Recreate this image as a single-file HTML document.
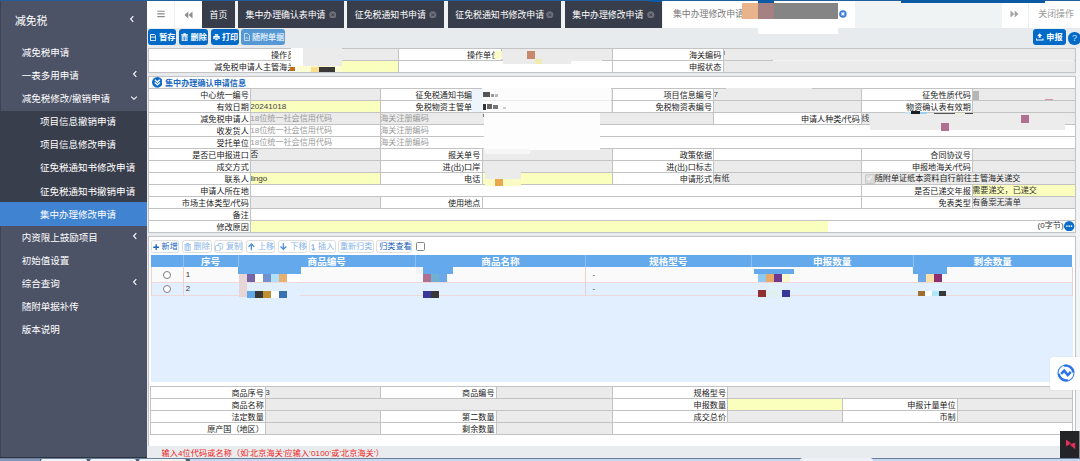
<!DOCTYPE html><html lang="zh-CN"><head><meta charset="utf-8"><title>减免税</title>
<style>html,body{margin:0;padding:0}body{width:1080px;height:461px;position:relative;overflow:hidden;background:#e7ebee;font-family:"Liberation Sans","Noto Sans CJK SC",sans-serif;font-size:8.1px;color:#222}
div{box-sizing:border-box}.t{position:absolute;white-space:nowrap;line-height:1}
.c{position:absolute;overflow:hidden;white-space:nowrap;line-height:1}.lab{text-align:right;color:#1a1a1a}
.sb{position:absolute;left:0;width:147px;color:#fff;font-size:9.45px;white-space:nowrap}
.tab{position:absolute;top:1px;height:26.5px;background:#383d4b;color:#fff;font-size:8.9px;line-height:28.1px;white-space:nowrap}
.btn{position:absolute;border-radius:2.5px;color:#fff;font-weight:bold;font-size:8.1px;white-space:nowrap;overflow:hidden}
.gb{position:absolute;top:240.4px;height:12.7px;border:0.7px solid #dedede;border-radius:2.6px;background:#fff;font-size:8.1px;line-height:11.3px;white-space:nowrap}
</style></head><body>
<div style="position:absolute;left:0.00px;top:0.00px;width:1080.00px;height:1.00px;background:#215f9c;"></div>
<div style="position:absolute;left:0.00px;top:1.00px;width:147.00px;height:457.00px;background:#4d5367;"></div>
<div style="position:absolute;left:0.00px;top:1.00px;width:1.20px;height:457.00px;background:#3e4356;"></div>
<div style="position:absolute;left:0.00px;top:110.60px;width:147.00px;height:91.80px;background:#393e4c;"></div>
<div style="position:absolute;left:0.00px;top:202.40px;width:147.00px;height:23.30px;background:#4083d1;"></div>
<div class="t" style="left:15.00px;top:15.50px;color:#fff;font-size:10.80px">减免税</div>
<svg style="position:absolute;left:128.60px;top:14.90px" width="6" height="8" viewBox="0 0 6 8"><path d="M4.3 1.2 L1.6 4 L4.3 6.8" fill="none" stroke="#fff" stroke-width="1.1"/></svg>
<div class="t" style="left:21.70px;top:47.94px;color:#fff;font-size:9.52px">减免税申请</div>
<div class="t" style="left:21.70px;top:71.04px;color:#fff;font-size:9.52px">一表多用申请</div>
<svg style="position:absolute;left:131.50px;top:69.80px" width="6" height="8" viewBox="0 0 6 8"><path d="M4.3 1.2 L1.6 4 L4.3 6.8" fill="none" stroke="#fff" stroke-width="1.1"/></svg>
<div class="t" style="left:21.70px;top:94.14px;color:#fff;font-size:9.52px">减免税修改/撤销申请</div>
<svg style="position:absolute;left:129.80px;top:94.70px" width="8" height="6" viewBox="0 0 8 6"><path d="M1.2 1.6 L4 4.3 L6.8 1.6" fill="none" stroke="#fff" stroke-width="1.1"/></svg>
<div class="t" style="left:40.00px;top:117.24px;color:#fff;font-size:9.52px">项目信息撤销申请</div>
<div class="t" style="left:40.00px;top:140.34px;color:#fff;font-size:9.52px">项目信息修改申请</div>
<div class="t" style="left:40.00px;top:163.44px;color:#fff;font-size:9.52px">征免税通知书修改申请</div>
<div class="t" style="left:40.00px;top:186.54px;color:#fff;font-size:9.52px">征免税通知书撤销申请</div>
<div class="t" style="left:40.00px;top:209.64px;color:#fff;font-size:9.52px">集中办理修改申请</div>
<div class="t" style="left:21.70px;top:232.74px;color:#fff;font-size:9.52px">内资限上鼓励项目</div>
<svg style="position:absolute;left:131.50px;top:231.50px" width="6" height="8" viewBox="0 0 6 8"><path d="M4.3 1.2 L1.6 4 L4.3 6.8" fill="none" stroke="#fff" stroke-width="1.1"/></svg>
<div class="t" style="left:21.70px;top:255.84px;color:#fff;font-size:9.52px">初始值设置</div>
<div class="t" style="left:21.70px;top:278.94px;color:#fff;font-size:9.52px">综合查询</div>
<svg style="position:absolute;left:131.50px;top:277.70px" width="6" height="8" viewBox="0 0 6 8"><path d="M4.3 1.2 L1.6 4 L4.3 6.8" fill="none" stroke="#fff" stroke-width="1.1"/></svg>
<div class="t" style="left:21.70px;top:302.04px;color:#fff;font-size:9.52px">随附单据补传</div>
<div class="t" style="left:21.70px;top:325.14px;color:#fff;font-size:9.52px">版本说明</div>
<div style="position:absolute;left:147.00px;top:1.00px;width:933.00px;height:26.80px;background:#eff3f4;"></div>
<div style="position:absolute;left:147.00px;top:1.00px;width:54.75px;height:26.50px;background:#fff;"></div>
<div style="position:absolute;left:174.00px;top:1.00px;width:0.60px;height:26.50px;background:#eceef0;"></div>
<svg style="position:absolute;left:156.5px;top:10px" width="8" height="8" viewBox="0 0 8 8"><path d="M0.3 1.2H7.7M0.3 3.9H7.7M0.3 6.6H7.7" stroke="#8a8a8a" stroke-width="1.1"/></svg>
<svg style="position:absolute;left:183.5px;top:10.5px" width="9" height="8" viewBox="0 0 9 8"><path d="M4.3 0.5 L4.3 7.5 L0.5 4 Z M8.5 0.5 L8.5 7.5 L4.7 4 Z" fill="#8d8d8d"/></svg>
<div class="tab" style="left:201.75px;width:32.75px"><span style="position:absolute;left:7.8px;top:0">首页</span></div>
<div class="tab" style="left:237.75px;width:106.00px"><span style="position:absolute;left:7.8px;top:0">集中办理确认表申请</span><svg style="position:absolute;right:7.3px;top:9.6px" width="7.6" height="7.6" viewBox="0 0 10 10"><circle cx="5" cy="5" r="4.7" fill="#6d707a"/><path d="M3.2 3.2L6.8 6.8M6.8 3.2L3.2 6.8" stroke="#383d4b" stroke-width="1.3"/></svg></div>
<div class="tab" style="left:347.00px;width:97.25px"><span style="position:absolute;left:7.8px;top:0">征免税通知书申请</span><svg style="position:absolute;right:7.3px;top:9.6px" width="7.6" height="7.6" viewBox="0 0 10 10"><circle cx="5" cy="5" r="4.7" fill="#6d707a"/><path d="M3.2 3.2L6.8 6.8M6.8 3.2L3.2 6.8" stroke="#383d4b" stroke-width="1.3"/></svg></div>
<div class="tab" style="left:447.50px;width:113.75px"><span style="position:absolute;left:7.8px;top:0">征免税通知书修改申请</span><svg style="position:absolute;right:7.3px;top:9.6px" width="7.6" height="7.6" viewBox="0 0 10 10"><circle cx="5" cy="5" r="4.7" fill="#6d707a"/><path d="M3.2 3.2L6.8 6.8M6.8 3.2L3.2 6.8" stroke="#383d4b" stroke-width="1.3"/></svg></div>
<div class="tab" style="left:564.50px;width:97.50px"><span style="position:absolute;left:7.8px;top:0">集中办理修改申请</span><svg style="position:absolute;right:7.3px;top:9.6px" width="7.6" height="7.6" viewBox="0 0 10 10"><circle cx="5" cy="5" r="4.7" fill="#6d707a"/><path d="M3.2 3.2L6.8 6.8M6.8 3.2L3.2 6.8" stroke="#383d4b" stroke-width="1.3"/></svg></div>
<div style="position:absolute;left:663.00px;top:1.00px;width:192.00px;height:26.50px;background:#fff;"></div>
<div class="t" style="left:673px;top:10.4px;font-size:8.9px;color:#7a7a7a">集中办理修改申请</div>
<div style="position:absolute;left:742.00px;top:3.00px;width:16.00px;height:15.80px;background:#e9b48b;"></div>
<div style="position:absolute;left:758.00px;top:3.00px;width:16.00px;height:15.80px;background:#a68181;"></div>
<div style="position:absolute;left:774.00px;top:3.00px;width:63.50px;height:15.80px;background:#858585;"></div>
<svg style="position:absolute;left:839.2px;top:10.4px" width="7.8" height="7.8" viewBox="0 0 10 10"><circle cx="5" cy="5" r="4.8" fill="#3f7fd0"/><path d="M3.2 3.2L6.8 6.8M6.8 3.2L3.2 6.8" stroke="#fff" stroke-width="1.4"/></svg>
<div style="position:absolute;left:1001.90px;top:1.00px;width:78.10px;height:26.50px;background:#fff;"></div>
<div style="position:absolute;left:1028.00px;top:1.00px;width:0.60px;height:26.50px;background:#eceef0;"></div>
<svg style="position:absolute;left:1010px;top:10.2px" width="9" height="8" viewBox="0 0 9 8"><path d="M0.5 0.5 L0.5 7.5 L4.3 4 Z M4.7 0.5 L4.7 7.5 L8.5 4 Z" fill="#a3a3a3"/></svg>
<div class="t" style="left:1038.3px;top:10.3px;font-size:8.9px;color:#9a9a9a">关闭操作</div>
<div style="position:absolute;left:0.00px;top:0.00px;width:1080.00px;height:1.00px;background:#215f9c;"></div>
<div style="position:absolute;left:650.00px;top:0.00px;width:12.00px;height:1.50px;background:#0b5aa3;"></div>
<div style="position:absolute;left:758.00px;top:0.00px;width:16.00px;height:3.00px;background:#0b5aa3;"></div>
<div style="position:absolute;left:901.30px;top:0.00px;width:143.50px;height:2.80px;background:#0b5aa3;"></div>
<div style="position:absolute;left:147.00px;top:27.80px;width:933.00px;height:20.20px;background:#e7ebee;"></div>
<div class="btn" style="left:148.40px;top:29.3px;width:27.60px;height:15.5px;background:#036bc7;line-height:16.2px;color:#fff;border-radius:3px"><svg style="position:absolute;left:1.4px;top:4.4px" width="6.2" height="7.2" viewBox="0 0 6.2 7.2"><path d="M0.5 0.5H4.6L5.7 1.6V6.7H0.5Z" fill="none" stroke="#fff" stroke-width="0.95"/><path d="M0.6 3.1H5.6" stroke="#fff" stroke-width="0.9"/></svg><span style="position:absolute;left:10.80px;top:0.9px">暂存</span></div>
<div class="btn" style="left:179.00px;top:29.3px;width:29.00px;height:15.5px;background:#036bc7;line-height:16.2px;color:#fff;border-radius:3px"><svg style="position:absolute;left:1.8px;top:3.4px" width="7.2" height="8.6" viewBox="0 0 7.2 8.6"><path d="M0.2 1.9H7M2.4 0.7H4.8" stroke="#fff" stroke-width="1.1"/><path d="M1.2 3H6V8H1.2Z" fill="none" stroke="#fff" stroke-width="1"/><path d="M2.8 3V8M4.4 3V8" stroke="#fff" stroke-width="0.8"/></svg><span style="position:absolute;left:11.60px;top:0.9px">删除</span></div>
<div class="btn" style="left:211.00px;top:29.3px;width:27.70px;height:15.5px;background:#036bc7;line-height:16.2px;color:#fff;border-radius:3px"><svg style="position:absolute;left:1.8px;top:5px" width="7" height="6.6" viewBox="0 0 7 6.6"><path d="M1.8 0.3H5.2V1.8H1.8Z" fill="#fff"/><path d="M0.3 2H6.7V5H0.3Z" fill="#fff"/><path d="M1.9 3.9H5.1V6.3H1.9Z" fill="#fff" stroke="#036bc7" stroke-width="0.55"/></svg><span style="position:absolute;left:10.90px;top:0.9px">打印</span></div>
<div class="btn" style="left:241.00px;top:29.3px;width:44.30px;height:15.5px;background:#5698d4;line-height:16.2px;color:#dbe9f8;border-radius:3px"><svg style="position:absolute;left:3.2px;top:3.8px" width="6" height="8" viewBox="0 0 6 8"><path d="M0.5 0.5H3.6L5.5 2.4V7.5H0.5Z" fill="none" stroke="#d6e6f7" stroke-width="0.85"/><path d="M1.6 5.8L2.8 4.2L4.2 6" fill="none" stroke="#d6e6f7" stroke-width="0.7"/></svg><span style="position:absolute;left:10.90px;top:0.9px">随附单据</span></div>
<div class="btn" style="left:1032.80px;top:29.3px;width:33.30px;height:15.5px;background:#036bc7;line-height:16.2px;color:#fff;border-radius:3px"><svg style="position:absolute;left:3.6px;top:4px" width="7.4" height="7.6" viewBox="0 0 7.4 7.6"><path d="M3.7 0.2L6.2 3H4.7V4.8H2.7V3H1.2Z" fill="#fff"/><path d="M0.4 5.4V7H7V5.4" fill="none" stroke="#fff" stroke-width="1.1"/></svg><span style="position:absolute;left:13.50px;top:0.9px">申报</span></div>
<div style="position:absolute;left:1068.3px;top:32.3px;width:12.4px;height:12.4px;border-radius:50%;background:#036bc7;color:#cfe2f6;font-size:9px;line-height:12.4px;text-align:center">?</div>
<div style="position:absolute;left:758.00px;top:18.80px;width:79.50px;height:15.70px;background:#fff;"></div>
<div style="position:absolute;left:290.00px;top:44.00px;width:48.00px;height:4.60px;background:#e7ebee;"></div>
<div style="position:absolute;left:1076.20px;top:48.00px;width:3.80px;height:398.30px;background:#f3f4f6;"></div>
<div style="position:absolute;left:147.75px;top:48.00px;width:928.25px;height:24.50px;background:#c3c3c3;"></div>
<div class="c lab" style="left:148.75px;top:49.00px;width:147.75px;height:10.75px;background:#ffffff;line-height:14.35px;padding-right:1.20px;">操作员</div>
<div class="c " style="left:297.50px;top:49.00px;width:100.75px;height:10.75px;background:#ebebeb;line-height:11.55px;padding-left:0.00px;text-indent:-0.8px;"></div>
<div class="c lab" style="left:399.25px;top:49.00px;width:101.25px;height:10.75px;background:#ffffff;line-height:14.35px;padding-right:1.20px;">操作单位</div>
<div class="c " style="left:501.50px;top:49.00px;width:110.00px;height:10.75px;background:#ebebeb;line-height:11.55px;padding-left:0.00px;text-indent:-0.8px;"></div>
<div class="c lab" style="left:612.50px;top:49.00px;width:110.00px;height:10.75px;background:#ffffff;line-height:14.35px;padding-right:1.20px;">海关编码</div>
<div class="c " style="left:723.50px;top:49.00px;width:351.50px;height:10.75px;background:#ebebeb;line-height:11.55px;padding-left:0.00px;text-indent:-0.8px;"></div>
<div class="c lab" style="left:148.75px;top:60.75px;width:147.75px;height:10.75px;background:#ffffff;line-height:14.35px;padding-right:1.20px;">减免税申请人主管海关</div>
<div class="c " style="left:297.50px;top:60.75px;width:100.75px;height:10.75px;background:#faffbd;line-height:11.55px;padding-left:0.00px;text-indent:-0.8px;"></div>
<div class="c " style="left:399.25px;top:60.75px;width:212.25px;height:10.75px;background:#ffffff;line-height:11.55px;padding-left:0.00px;text-indent:-0.8px;"></div>
<div class="c lab" style="left:612.50px;top:60.75px;width:110.00px;height:10.75px;background:#ffffff;line-height:14.35px;padding-right:1.20px;">申报状态</div>
<div class="c " style="left:723.50px;top:60.75px;width:351.50px;height:10.75px;background:#ebebeb;line-height:11.55px;padding-left:0.00px;text-indent:-0.8px;"></div>
<div style="position:absolute;left:147.75px;top:75.60px;width:928.25px;height:157.01px;background:#c3c3c3;"></div>
<div style="position:absolute;left:148.75px;top:76.50px;width:926.25px;height:11.55px;background:#ffffff;"></div>
<svg style="position:absolute;left:151.7px;top:77.1px" width="10.7" height="10.7" viewBox="0 0 10 10"><circle cx="5" cy="5" r="5" fill="#0a6cc8"/><path d="M2.6 2.6L5 4.8L7.4 2.6M2.6 5.2L5 7.4L7.4 5.2" fill="none" stroke="#fff" stroke-width="1.3"/></svg>
<div class="t" style="left:165px;top:79.5px;font-size:8.12px;font-weight:bold;color:#1a6ac2">集中办理确认申请信息</div>
<div class="c lab" style="left:148.75px;top:89.05px;width:101.25px;height:10.96px;background:#ffffff;line-height:14.56px;padding-right:1.20px;">中心统一编号</div>
<div class="c " style="left:251.00px;top:89.05px;width:129.00px;height:10.96px;background:#ebebeb;line-height:11.76px;padding-left:0.00px;text-indent:-0.8px;"></div>
<div class="c lab" style="left:381.00px;top:89.05px;width:100.50px;height:10.96px;background:#ffffff;line-height:14.56px;padding-right:1.20px;">征免税通知书编号</div>
<div class="c " style="left:482.50px;top:89.05px;width:129.00px;height:10.96px;background:#ebebeb;line-height:11.76px;padding-left:0.00px;text-indent:-0.8px;"></div>
<div class="c lab" style="left:612.50px;top:89.05px;width:100.75px;height:10.96px;background:#ffffff;line-height:14.56px;padding-right:1.20px;">项目信息编号</div>
<div class="c " style="left:714.25px;top:89.05px;width:146.75px;height:10.96px;background:#ebebeb;line-height:11.76px;color:#444;padding-left:0.00px;text-indent:-0.8px;">7</div>
<div class="c lab" style="left:862.00px;top:89.05px;width:110.00px;height:10.96px;background:#ffffff;line-height:14.56px;padding-right:1.20px;">征免性质代码</div>
<div class="c " style="left:973.00px;top:89.05px;width:102.00px;height:10.96px;background:#ebebeb;line-height:11.76px;padding-left:0.00px;text-indent:-0.8px;"></div>
<div class="c lab" style="left:148.75px;top:101.01px;width:101.25px;height:10.96px;background:#ffffff;line-height:14.56px;padding-right:1.20px;">有效日期</div>
<div class="c " style="left:251.00px;top:101.01px;width:129.00px;height:10.96px;background:#faffbd;line-height:11.76px;color:#444;padding-left:0.00px;text-indent:-0.8px;">20241018</div>
<div class="c lab" style="left:381.00px;top:101.01px;width:100.50px;height:10.96px;background:#ffffff;line-height:14.56px;padding-right:1.20px;">免税物资主管单位</div>
<div class="c " style="left:482.50px;top:101.01px;width:129.00px;height:10.96px;background:#ebebeb;line-height:11.76px;padding-left:0.00px;text-indent:-0.8px;"></div>
<div class="c lab" style="left:612.50px;top:101.01px;width:100.75px;height:10.96px;background:#ffffff;line-height:14.56px;padding-right:1.20px;">免税物资表编号</div>
<div class="c " style="left:714.25px;top:101.01px;width:146.75px;height:10.96px;background:#ebebeb;line-height:11.76px;padding-left:0.00px;text-indent:-0.8px;"></div>
<div class="c lab" style="left:862.00px;top:101.01px;width:110.00px;height:10.96px;background:#ffffff;line-height:14.56px;padding-right:1.20px;">物资确认表有效期</div>
<div class="c " style="left:973.00px;top:101.01px;width:102.00px;height:10.96px;background:#ebebeb;line-height:11.76px;padding-left:0.00px;text-indent:-0.8px;"></div>
<div class="c lab" style="left:148.75px;top:112.98px;width:101.25px;height:10.96px;background:#ffffff;line-height:14.56px;padding-right:1.20px;">减免税申请人</div>
<div class="c " style="left:251.00px;top:112.98px;width:129.00px;height:10.96px;background:#ebebeb;line-height:11.76px;color:#9a9a9a;padding-left:0.00px;text-indent:-0.8px;">18位统一社会信用代码</div>
<div class="c " style="left:381.00px;top:112.98px;width:332.25px;height:10.96px;background:#ebebeb;line-height:11.76px;color:#9a9a9a;padding-left:0.00px;text-indent:-0.8px;">海关注册编码</div>
<div class="c lab" style="left:714.25px;top:112.98px;width:146.75px;height:10.96px;background:#ffffff;line-height:14.56px;padding-right:1.20px;">申请人种类/代码</div>
<div class="c " style="left:862.00px;top:112.98px;width:213.00px;height:10.96px;background:#ebebeb;line-height:11.76px;color:#444;padding-left:0.00px;text-indent:-0.8px;">线</div>
<div class="c lab" style="left:148.75px;top:124.94px;width:101.25px;height:10.96px;background:#ffffff;line-height:14.56px;padding-right:1.20px;">收发货人</div>
<div class="c " style="left:251.00px;top:124.94px;width:129.00px;height:10.96px;background:#ffffff;line-height:11.76px;color:#9a9a9a;padding-left:0.00px;text-indent:-0.8px;">18位统一社会信用代码</div>
<div class="c " style="left:381.00px;top:124.94px;width:694.00px;height:10.96px;background:#ffffff;line-height:11.76px;color:#9a9a9a;padding-left:0.00px;text-indent:-0.8px;">海关注册编码</div>
<div class="c lab" style="left:148.75px;top:136.90px;width:101.25px;height:10.96px;background:#ffffff;line-height:14.56px;padding-right:1.20px;">受托单位</div>
<div class="c " style="left:251.00px;top:136.90px;width:129.00px;height:10.96px;background:#ffffff;line-height:11.76px;color:#9a9a9a;padding-left:0.00px;text-indent:-0.8px;">18位统一社会信用代码</div>
<div class="c " style="left:381.00px;top:136.90px;width:694.00px;height:10.96px;background:#ffffff;line-height:11.76px;color:#9a9a9a;padding-left:0.00px;text-indent:-0.8px;">海关注册编码</div>
<div class="c lab" style="left:148.75px;top:148.87px;width:101.25px;height:10.96px;background:#ffffff;line-height:14.56px;padding-right:1.20px;">是否已申报进口</div>
<div class="c " style="left:251.00px;top:148.87px;width:129.00px;height:10.96px;background:#ebebeb;line-height:11.76px;color:#333;padding-left:0.00px;text-indent:-0.8px;">否</div>
<div class="c lab" style="left:381.00px;top:148.87px;width:100.50px;height:10.96px;background:#ffffff;line-height:14.56px;padding-right:1.20px;">报关单号</div>
<div class="c " style="left:482.50px;top:148.87px;width:129.00px;height:10.96px;background:#ebebeb;line-height:11.76px;padding-left:0.00px;text-indent:-0.8px;"></div>
<div class="c lab" style="left:612.50px;top:148.87px;width:100.75px;height:10.96px;background:#ffffff;line-height:14.56px;padding-right:1.20px;">政策依据</div>
<div class="c " style="left:714.25px;top:148.87px;width:146.75px;height:10.96px;background:#ffffff;line-height:11.76px;padding-left:0.00px;text-indent:-0.8px;"></div>
<div class="c lab" style="left:862.00px;top:148.87px;width:110.00px;height:10.96px;background:#ffffff;line-height:14.56px;padding-right:1.20px;">合同协议号</div>
<div class="c " style="left:973.00px;top:148.87px;width:102.00px;height:10.96px;background:#ebebeb;line-height:11.76px;padding-left:0.00px;text-indent:-0.8px;"></div>
<div class="c lab" style="left:148.75px;top:160.83px;width:101.25px;height:10.96px;background:#ffffff;line-height:14.56px;padding-right:1.20px;">成交方式</div>
<div class="c " style="left:251.00px;top:160.83px;width:129.00px;height:10.96px;background:#ebebeb;line-height:11.76px;padding-left:0.00px;text-indent:-0.8px;"></div>
<div class="c lab" style="left:381.00px;top:160.83px;width:100.50px;height:10.96px;background:#ffffff;line-height:14.56px;padding-right:1.20px;">进(出)口岸</div>
<div class="c " style="left:482.50px;top:160.83px;width:129.00px;height:10.96px;background:#ebebeb;line-height:11.76px;padding-left:0.00px;text-indent:-0.8px;"></div>
<div class="c lab" style="left:612.50px;top:160.83px;width:100.75px;height:10.96px;background:#ffffff;line-height:14.56px;padding-right:1.20px;">进(出)口标志</div>
<div class="c " style="left:714.25px;top:160.83px;width:146.75px;height:10.96px;background:#ebebeb;line-height:11.76px;padding-left:0.00px;text-indent:-0.8px;"></div>
<div class="c lab" style="left:862.00px;top:160.83px;width:110.00px;height:10.96px;background:#ffffff;line-height:14.56px;padding-right:1.20px;">申报地海关/代码</div>
<div class="c " style="left:973.00px;top:160.83px;width:102.00px;height:10.96px;background:#ebebeb;line-height:11.76px;padding-left:0.00px;text-indent:-0.8px;"></div>
<div class="c lab" style="left:148.75px;top:172.79px;width:101.25px;height:10.96px;background:#ffffff;line-height:14.56px;padding-right:1.20px;">联系人</div>
<div class="c " style="left:251.00px;top:172.79px;width:129.00px;height:10.96px;background:#faffbd;line-height:11.76px;color:#333;padding-left:0.00px;text-indent:-0.8px;">lingo</div>
<div class="c lab" style="left:381.00px;top:172.79px;width:100.50px;height:10.96px;background:#ffffff;line-height:14.56px;padding-right:1.20px;">电话</div>
<div class="c " style="left:482.50px;top:172.79px;width:129.00px;height:10.96px;background:#faffbd;line-height:11.76px;padding-left:0.00px;text-indent:-0.8px;"></div>
<div class="c lab" style="left:612.50px;top:172.79px;width:100.75px;height:10.96px;background:#ffffff;line-height:14.56px;padding-right:1.20px;">申请形式</div>
<div class="c " style="left:714.25px;top:172.79px;width:146.75px;height:10.96px;background:#ebebeb;line-height:11.76px;color:#333;padding-left:0.00px;text-indent:-0.8px;">有纸</div>
<div class="c " style="left:862.00px;top:172.79px;width:213.00px;height:10.96px;background:#ebebeb;line-height:11.76px;color:#222;padding-left:0.00px;text-indent:-0.8px;"><span style="position:absolute;left:3px;top:1.6px;width:7.6px;height:7.8px;border:0.7px solid #c9c9c9;background:#dcdcdc;border-radius:1px"></span><svg style="position:absolute;left:3.6px;top:2.6px" width="7" height="6" viewBox="0 0 7 6"><path d="M1 3L2.8 4.8L6 1" fill="none" stroke="#f4f4f4" stroke-width="1.2"/></svg><span style="position:absolute;left:13.5px;top:0">随附单证纸本资料自行前往主管海关递交</span></div>
<div class="c lab" style="left:148.75px;top:184.75px;width:101.25px;height:10.96px;background:#ffffff;line-height:14.56px;padding-right:1.20px;">申请人所在地</div>
<div class="c " style="left:251.00px;top:184.75px;width:610.00px;height:10.96px;background:#ffffff;line-height:11.76px;padding-left:0.00px;text-indent:-0.8px;"></div>
<div class="c lab" style="left:862.00px;top:184.75px;width:110.00px;height:10.96px;background:#ffffff;line-height:14.56px;padding-right:1.20px;">是否已递交年报</div>
<div class="c " style="left:973.00px;top:184.75px;width:102.00px;height:10.96px;background:#faffbd;line-height:11.76px;color:#333;padding-left:0.00px;text-indent:-0.8px;">需要递交，已递交</div>
<div class="c lab" style="left:148.75px;top:196.72px;width:101.25px;height:10.96px;background:#ffffff;line-height:14.56px;padding-right:1.20px;">市场主体类型/代码</div>
<div class="c " style="left:251.00px;top:196.72px;width:129.00px;height:10.96px;background:#ebebeb;line-height:11.76px;padding-left:0.00px;text-indent:-0.8px;"></div>
<div class="c lab" style="left:381.00px;top:196.72px;width:100.50px;height:10.96px;background:#ffffff;line-height:14.56px;padding-right:1.20px;">使用地点</div>
<div class="c " style="left:482.50px;top:196.72px;width:378.50px;height:10.96px;background:#ffffff;line-height:11.76px;padding-left:0.00px;text-indent:-0.8px;"></div>
<div class="c lab" style="left:862.00px;top:196.72px;width:110.00px;height:10.96px;background:#ffffff;line-height:14.56px;padding-right:1.20px;">免表类型</div>
<div class="c " style="left:973.00px;top:196.72px;width:102.00px;height:10.96px;background:#ebebeb;line-height:11.76px;color:#333;padding-left:0.00px;text-indent:-0.8px;">有备案无清单</div>
<div class="c lab" style="left:148.75px;top:208.68px;width:101.25px;height:10.96px;background:#ffffff;line-height:14.56px;padding-right:1.20px;">备注</div>
<div class="c " style="left:251.00px;top:208.68px;width:824.00px;height:10.96px;background:#ffffff;line-height:11.76px;padding-left:0.00px;text-indent:-0.8px;"></div>
<div class="c lab" style="left:148.75px;top:220.64px;width:101.25px;height:10.96px;background:#ffffff;line-height:14.56px;padding-right:1.20px;">修改原因</div>
<div class="c " style="left:251.00px;top:220.64px;width:824.00px;height:10.96px;background:#ffffff;line-height:11.76px;padding-left:0.00px;text-indent:-0.8px;"></div>
<div style="position:absolute;left:251.00px;top:220.64px;width:577.00px;height:10.96px;background:#faffbd;"></div>
<div class="t" style="left:1037.5px;top:222.34px;font-size:8.1px;color:#333">(0字节)</div>
<svg style="position:absolute;left:1064.3px;top:221.04px" width="10.4" height="10.4" viewBox="0 0 10 10"><circle cx="5" cy="5" r="5" fill="#0a6cc8"/><circle cx="2.8" cy="5" r="0.8" fill="#fff"/><circle cx="5" cy="5" r="0.8" fill="#fff"/><circle cx="7.2" cy="5" r="0.8" fill="#fff"/></svg>
<div style="position:absolute;left:147.90px;top:236.00px;width:928.10px;height:210.30px;background:#c3c3c3;"></div>
<div style="position:absolute;left:148.80px;top:236.90px;width:926.30px;height:209.40px;background:#ffffff;"></div>
<div class="gb" style="left:151.00px;width:28.00px;color:#1a68c4"><svg style="position:absolute;left:0.80px;top:2.30px" width="6.4" height="6.4" viewBox="0 0 6.4 6.4"><path d="M3.2 0.2V6.2M0.2 3.2H6.2" stroke="#1a68c4" stroke-width="1.4"/></svg><span style="position:absolute;left:9.60px;top:0.1px">新增</span></div>
<div class="gb" style="left:181.70px;width:30.30px;color:#86b4e8"><svg style="position:absolute;left:1.40px;top:1.40px" width="7.2" height="8.3" viewBox="0 0 7.2 8.3"><path d="M0.2 1.7H7M2.4 0.5H4.8" stroke="#8fbaea" stroke-width="0.95"/><path d="M1.1 2.8H6.1V7.8H1.1Z" fill="none" stroke="#8fbaea" stroke-width="0.85"/><path d="M2.8 2.8V7.6M4.4 2.8V7.6" stroke="#8fbaea" stroke-width="0.75"/></svg><span style="position:absolute;left:10.90px;top:0.1px">删除</span></div>
<div class="gb" style="left:213.70px;width:29.30px;color:#86b4e8"><svg style="position:absolute;left:0.80px;top:1.40px" width="8.2" height="8.4" viewBox="0 0 8.2 8.4"><rect x="3" y="0.5" width="4.7" height="5.4" rx="1" fill="#fff" stroke="#8fbaea" stroke-width="0.8"/><rect x="0.5" y="2.5" width="4.7" height="5.4" rx="1" fill="#fff" stroke="#8fbaea" stroke-width="0.8"/></svg><span style="position:absolute;left:11.30px;top:0.1px">复制</span></div>
<div class="gb" style="left:246.20px;width:28.80px;color:#86b4e8"><svg style="position:absolute;left:1.30px;top:1.90px" width="6.8" height="7.4" viewBox="0 0 6.8 7.4"><path d="M3.4 7.2V1.2M0.5 3.9L3.4 1L6.3 3.9" fill="none" stroke="#4a90dc" stroke-width="1.35"/></svg><span style="position:absolute;left:10.80px;top:0.1px">上移</span></div>
<div class="gb" style="left:277.60px;width:29.40px;color:#86b4e8"><svg style="position:absolute;left:1.60px;top:1.90px" width="6.8" height="7.4" viewBox="0 0 6.8 7.4"><path d="M3.4 0.2V6.2M0.5 3.5L3.4 6.4L6.3 3.5" fill="none" stroke="#4a90dc" stroke-width="1.35"/></svg><span style="position:absolute;left:11.70px;top:0.1px">下移</span></div>
<div class="gb" style="left:309.20px;width:26.80px;color:#86b4e8"><svg style="position:absolute;left:1.30px;top:2.30px" width="4.2" height="7" viewBox="0 0 4.2 7"><path d="M2.3 0.4V6.2M0.6 4.6L2.3 6.3L4 4.6M0.6 1.6L2.3 0.5" fill="none" stroke="#6fa6e2" stroke-width="0.95"/></svg><span style="position:absolute;left:7.80px;top:0.1px">插入</span></div>
<div class="gb" style="left:337.90px;width:36.10px;color:#86b4e8"><span style="position:absolute;left:1.00px;top:0.1px">重新归类</span></div>
<div class="gb" style="left:376.40px;width:35.60px;color:#1560ba"><span style="position:absolute;left:1.80px;top:0.1px">归类查看</span></div>
<div style="position:absolute;left:416px;top:241.6px;width:9.4px;height:9.3px;border:0.9px solid #858585;border-radius:1.6px;background:#fff"></div>
<div style="position:absolute;left:151.00px;top:267.50px;width:922.20px;height:114.50px;background:#e2efff;"></div>
<div style="position:absolute;left:151.00px;top:255.00px;width:921.20px;height:12.00px;background:#64a9ec;"></div>
<div style="position:absolute;left:182.60px;top:255.00px;width:0.80px;height:12.00px;background:#8fc0f2;"></div>
<div class="t" style="left:183.00px;top:257.3px;width:55.00px;text-align:center;font-size:9.6px;font-weight:bold;color:#fff">序号</div>
<div style="position:absolute;left:237.60px;top:255.00px;width:0.80px;height:12.00px;background:#8fc0f2;"></div>
<div class="t" style="left:238.00px;top:257.3px;width:177.50px;text-align:center;font-size:9.6px;font-weight:bold;color:#fff">商品编号</div>
<div style="position:absolute;left:415.10px;top:255.00px;width:0.80px;height:12.00px;background:#8fc0f2;"></div>
<div class="t" style="left:415.50px;top:257.3px;width:170.00px;text-align:center;font-size:9.6px;font-weight:bold;color:#fff">商品名称</div>
<div style="position:absolute;left:585.10px;top:255.00px;width:0.80px;height:12.00px;background:#8fc0f2;"></div>
<div class="t" style="left:585.50px;top:257.3px;width:165.50px;text-align:center;font-size:9.6px;font-weight:bold;color:#fff">规格型号</div>
<div style="position:absolute;left:750.60px;top:255.00px;width:0.80px;height:12.00px;background:#8fc0f2;"></div>
<div class="t" style="left:751.00px;top:257.3px;width:162.30px;text-align:center;font-size:9.6px;font-weight:bold;color:#fff">申报数量</div>
<div style="position:absolute;left:912.90px;top:255.00px;width:0.80px;height:12.00px;background:#8fc0f2;"></div>
<div class="t" style="left:913.30px;top:257.3px;width:158.90px;text-align:center;font-size:9.6px;font-weight:bold;color:#fff">剩余数量</div>
<div style="position:absolute;left:151.00px;top:267.00px;width:921.20px;height:15.00px;background:#fafafa;"></div>
<div style="position:absolute;left:151.00px;top:281.60px;width:921.20px;height:0.60px;background:#efd8d8;"></div>
<div style="position:absolute;left:151.00px;top:295.20px;width:921.20px;height:0.60px;background:#efd8d8;"></div>
<div style="position:absolute;left:183.20px;top:267.00px;width:0.60px;height:28.60px;background:#edcfcf;"></div>
<div style="position:absolute;left:585.20px;top:267.00px;width:0.60px;height:28.60px;background:#edcfcf;"></div>
<div style="position:absolute;left:150.70px;top:267.00px;width:0.60px;height:28.60px;background:#edcfcf;"></div>
<div style="position:absolute;left:1071.90px;top:267.00px;width:0.60px;height:28.60px;background:#edcfcf;"></div>
<div style="position:absolute;left:163.00px;top:270.80px;width:8.4px;height:8.4px;border-radius:50%;border:0.75px solid #808080;background:#fff"></div>
<div style="position:absolute;left:163.00px;top:284.70px;width:8.4px;height:8.4px;border-radius:50%;border:0.75px solid #808080;background:#fff"></div>
<div class="t" style="left:185.8px;top:271px;font-size:7.8px;color:#333">1</div>
<div class="t" style="left:185.8px;top:284.5px;font-size:7.8px;color:#333">2</div>
<div class="t" style="left:592.5px;top:271px;font-size:7.8px;color:#333">-</div>
<div class="t" style="left:592.5px;top:284.5px;font-size:7.8px;color:#333">-</div>
<div style="position:absolute;left:238.00px;top:266.50px;width:63.00px;height:7.40px;background:#64a9ec;"></div>
<div style="position:absolute;left:239.40px;top:274.00px;width:7.60px;height:23.00px;background:#e8d6d6;"></div>
<div style="position:absolute;left:247.00px;top:274.00px;width:53.00px;height:8.00px;background:#fff;"></div>
<div style="position:absolute;left:247.00px;top:282.50px;width:53.00px;height:15.50px;background:#e2efff;"></div>
<div style="position:absolute;left:247.00px;top:274.40px;width:8.00px;height:7.60px;background:#7565a8;"></div>
<div style="position:absolute;left:255.00px;top:274.40px;width:8.00px;height:7.60px;background:#fff;"></div>
<div style="position:absolute;left:263.00px;top:274.40px;width:8.00px;height:7.60px;background:#7090d0;"></div>
<div style="position:absolute;left:271.00px;top:274.40px;width:8.00px;height:7.60px;background:#b0e0f8;"></div>
<div style="position:absolute;left:279.00px;top:274.40px;width:8.00px;height:7.60px;background:#e8b070;"></div>
<div style="position:absolute;left:247.00px;top:290.50px;width:8.00px;height:7.50px;background:#60a8e8;"></div>
<div style="position:absolute;left:255.00px;top:290.50px;width:8.00px;height:7.50px;background:#383838;"></div>
<div style="position:absolute;left:263.00px;top:290.50px;width:8.00px;height:7.50px;background:#c09030;"></div>
<div style="position:absolute;left:271.00px;top:290.50px;width:8.00px;height:7.50px;background:#fff;"></div>
<div style="position:absolute;left:279.00px;top:290.50px;width:8.00px;height:7.50px;background:#3870b8;"></div>
<div style="position:absolute;left:423.00px;top:266.50px;width:29.80px;height:7.40px;background:#64a9ec;"></div>
<div style="position:absolute;left:415.80px;top:267.00px;width:7.20px;height:7.00px;background:#f3f3f4;"></div>
<div style="position:absolute;left:423.00px;top:274.00px;width:8.00px;height:8.00px;background:#b07090;"></div>
<div style="position:absolute;left:431.00px;top:274.00px;width:8.00px;height:8.00px;background:#70b0d0;"></div>
<div style="position:absolute;left:439.00px;top:274.00px;width:8.00px;height:8.00px;background:#6aa8e8;"></div>
<div style="position:absolute;left:423.00px;top:290.50px;width:8.00px;height:7.50px;background:#383898;"></div>
<div style="position:absolute;left:431.00px;top:290.50px;width:8.00px;height:7.50px;background:#383838;"></div>
<div style="position:absolute;left:754.30px;top:269.30px;width:39.70px;height:4.70px;background:#64a9ec;"></div>
<div style="position:absolute;left:757.70px;top:274.00px;width:8.00px;height:8.00px;background:#90c8f0;"></div>
<div style="position:absolute;left:765.70px;top:274.00px;width:8.00px;height:8.00px;background:#e8a868;"></div>
<div style="position:absolute;left:773.70px;top:274.00px;width:8.00px;height:8.00px;background:#703890;"></div>
<div style="position:absolute;left:781.70px;top:274.00px;width:8.00px;height:8.00px;background:#f8f8d0;"></div>
<div style="position:absolute;left:757.70px;top:290.00px;width:8.00px;height:7.30px;background:#903030;"></div>
<div style="position:absolute;left:765.70px;top:290.00px;width:8.00px;height:7.30px;background:#e0f0f0;"></div>
<div style="position:absolute;left:773.70px;top:290.00px;width:8.00px;height:7.30px;background:#e0f0f0;"></div>
<div style="position:absolute;left:781.70px;top:290.00px;width:8.00px;height:7.30px;background:#383898;"></div>
<div style="position:absolute;left:913.30px;top:266.50px;width:33.40px;height:7.40px;background:#64a9ec;"></div>
<div style="position:absolute;left:917.50px;top:274.00px;width:8.00px;height:8.00px;background:#6aa8e8;"></div>
<div style="position:absolute;left:925.50px;top:274.00px;width:8.00px;height:8.00px;background:#f8e0a8;"></div>
<div style="position:absolute;left:933.50px;top:274.00px;width:8.00px;height:8.00px;background:#903070;"></div>
<div style="position:absolute;left:917.50px;top:290.50px;width:7.20px;height:5.50px;background:#a07030;"></div>
<div style="position:absolute;left:924.70px;top:290.50px;width:7.20px;height:5.50px;background:#fff;"></div>
<div style="position:absolute;left:931.90px;top:290.50px;width:7.20px;height:5.50px;background:#b0e8f8;"></div>
<div style="position:absolute;left:939.10px;top:290.50px;width:7.20px;height:5.50px;background:#383838;"></div>
<div style="position:absolute;left:149.80px;top:385.70px;width:923.40px;height:49.28px;background:#c3c3c3;"></div>
<div class="c lab" style="left:150.80px;top:386.70px;width:114.20px;height:11.07px;background:#ffffff;line-height:14.67px;padding-right:1.20px;">商品序号</div>
<div class="c " style="left:266.00px;top:386.70px;width:114.30px;height:11.07px;background:#ebebeb;line-height:11.87px;color:#444;padding-left:0.00px;text-indent:-0.8px;">3</div>
<div class="c lab" style="left:381.30px;top:386.70px;width:114.40px;height:11.07px;background:#ffffff;line-height:14.67px;padding-right:1.20px;">商品编号</div>
<div class="c " style="left:496.70px;top:386.70px;width:115.20px;height:11.07px;background:#ebebeb;line-height:11.87px;padding-left:0.00px;text-indent:-0.8px;"></div>
<div class="c lab" style="left:612.90px;top:386.70px;width:114.30px;height:11.07px;background:#ffffff;line-height:14.67px;padding-right:1.20px;">规格型号</div>
<div class="c " style="left:728.20px;top:386.70px;width:344.00px;height:11.07px;background:#ebebeb;line-height:11.87px;padding-left:0.00px;text-indent:-0.8px;"></div>
<div class="c lab" style="left:150.80px;top:398.77px;width:114.20px;height:11.07px;background:#ffffff;line-height:14.67px;padding-right:1.20px;">商品名称</div>
<div class="c " style="left:266.00px;top:398.77px;width:345.90px;height:11.07px;background:#ebebeb;line-height:11.87px;padding-left:0.00px;text-indent:-0.8px;"></div>
<div class="c lab" style="left:612.90px;top:398.77px;width:114.30px;height:11.07px;background:#ffffff;line-height:14.67px;padding-right:1.20px;">申报数量</div>
<div class="c " style="left:728.20px;top:398.77px;width:113.90px;height:11.07px;background:#faffbd;line-height:11.87px;padding-left:0.00px;text-indent:-0.8px;"></div>
<div class="c lab" style="left:843.10px;top:398.77px;width:113.80px;height:11.07px;background:#ffffff;line-height:14.67px;padding-right:1.20px;">申报计量单位</div>
<div class="c " style="left:957.90px;top:398.77px;width:114.30px;height:11.07px;background:#ebebeb;line-height:11.87px;padding-left:0.00px;text-indent:-0.8px;"></div>
<div class="c lab" style="left:150.80px;top:410.84px;width:114.20px;height:11.07px;background:#ffffff;line-height:14.67px;padding-right:1.20px;">法定数量</div>
<div class="c " style="left:266.00px;top:410.84px;width:114.30px;height:11.07px;background:#ebebeb;line-height:11.87px;padding-left:0.00px;text-indent:-0.8px;"></div>
<div class="c lab" style="left:381.30px;top:410.84px;width:114.40px;height:11.07px;background:#ffffff;line-height:14.67px;padding-right:1.20px;">第二数量</div>
<div class="c " style="left:496.70px;top:410.84px;width:115.20px;height:11.07px;background:#ebebeb;line-height:11.87px;padding-left:0.00px;text-indent:-0.8px;"></div>
<div class="c lab" style="left:612.90px;top:410.84px;width:114.30px;height:11.07px;background:#ffffff;line-height:14.67px;padding-right:1.20px;">成交总价</div>
<div class="c " style="left:728.20px;top:410.84px;width:113.90px;height:11.07px;background:#ebebeb;line-height:11.87px;padding-left:0.00px;text-indent:-0.8px;"></div>
<div class="c lab" style="left:843.10px;top:410.84px;width:113.80px;height:11.07px;background:#ffffff;line-height:14.67px;padding-right:1.20px;">币制</div>
<div class="c " style="left:957.90px;top:410.84px;width:114.30px;height:11.07px;background:#ebebeb;line-height:11.87px;padding-left:0.00px;text-indent:-0.8px;"></div>
<div class="c lab" style="left:150.80px;top:422.91px;width:114.20px;height:11.07px;background:#ffffff;line-height:14.67px;padding-right:1.20px;">原产国（地区）</div>
<div class="c " style="left:266.00px;top:422.91px;width:114.30px;height:11.07px;background:#ebebeb;line-height:11.87px;padding-left:0.00px;text-indent:-0.8px;"></div>
<div class="c lab" style="left:381.30px;top:422.91px;width:114.40px;height:11.07px;background:#ffffff;line-height:14.67px;padding-right:1.20px;">剩余数量</div>
<div class="c " style="left:496.70px;top:422.91px;width:115.20px;height:11.07px;background:#ebebeb;line-height:11.87px;padding-left:0.00px;text-indent:-0.8px;"></div>
<div class="c " style="left:612.90px;top:422.91px;width:459.30px;height:11.07px;background:#ffffff;line-height:11.87px;padding-left:0.00px;text-indent:-0.8px;"></div>
<div style="position:absolute;left:147.00px;top:446.20px;width:933.00px;height:11.60px;background:#e8ecee;"></div>
<div class="t" style="left:161.5px;top:449.7px;font-size:8.1px;letter-spacing:0.13px;color:#f01818">输入4位代码或名称（如'北京海关'应输入'0100'或'北京海关'）</div>
<div style="position:absolute;left:0.00px;top:457.70px;width:1080.00px;height:0.70px;background:#f2f5f8;"></div>
<div style="position:absolute;left:0.00px;top:458.40px;width:1080.00px;height:0.90px;background:#6d8099;"></div>
<div style="position:absolute;left:0.00px;top:459.30px;width:1080.00px;height:1.70px;background:#c5d8ee;"></div>
<div style="position:absolute;left:0.00px;top:457.40px;width:147.00px;height:1.10px;background:#2e3340;"></div>
<div style="position:absolute;left:0.00px;top:458.50px;width:190.00px;height:2.50px;background:#52627e;"></div>
<div style="position:absolute;left:0.00px;top:458.50px;width:40.00px;height:2.50px;background:#8198ba;"></div>
<div style="position:absolute;left:40.70px;top:458.80px;width:46.30px;height:2.20px;background:#f0f4f9;border-radius:1.5px 1.5px 0 0"></div>
<div style="position:absolute;left:90.20px;top:458.80px;width:46.30px;height:2.20px;background:#f0f4f9;border-radius:1.5px 1.5px 0 0"></div>
<div style="position:absolute;left:139.30px;top:458.80px;width:46.70px;height:2.20px;background:#f0f4f9;border-radius:1.5px 1.5px 0 0"></div>
<div style="position:absolute;left:800.00px;top:458.30px;width:73.00px;height:2.70px;background:#eef2f7;border-radius:5px 5px 0 0"></div>
<div style="position:absolute;left:472.00px;top:89.05px;width:10.00px;height:22.93px;background:#eef4fb;"></div>
<div style="position:absolute;left:482.00px;top:87.55px;width:129.00px;height:24.43px;background:#fcfcfc;"></div>
<div style="position:absolute;left:482.00px;top:100.21px;width:129.00px;height:0.60px;background:#ececec;"></div>
<div style="position:absolute;left:483.40px;top:91.95px;width:6.60px;height:5.20px;background:#555;"></div>
<div style="position:absolute;left:491.00px;top:93.55px;width:3.00px;height:3.00px;background:#999;"></div>
<div style="position:absolute;left:495.00px;top:94.05px;width:3.00px;height:2.50px;background:#bbb;"></div>
<div style="position:absolute;left:483.40px;top:103.51px;width:2.60px;height:6.00px;background:#333;"></div>
<div style="position:absolute;left:486.50px;top:103.91px;width:5.50px;height:5.40px;background:#666;"></div>
<div style="position:absolute;left:493.00px;top:104.51px;width:5.00px;height:4.60px;background:#777;"></div>
<div style="position:absolute;left:503.00px;top:106.51px;width:3.00px;height:2.00px;background:#ccc;"></div>
<div style="position:absolute;left:483.40px;top:114.48px;width:3.60px;height:3.00px;background:#777;"></div>
<div style="position:absolute;left:484.00px;top:112.98px;width:116.00px;height:37.39px;background:#fdfdfd;"></div>
<div style="position:absolute;left:485.00px;top:148.87px;width:45.00px;height:5.50px;background:#f6f6f6;"></div>
<div style="position:absolute;left:485.00px;top:161.50px;width:35.75px;height:17.50px;background:#ebebeb;"></div>
<div style="position:absolute;left:485.00px;top:179.00px;width:35.75px;height:7.00px;background:#fbfbc6;"></div>
<div style="position:absolute;left:494.50px;top:179.00px;width:8.00px;height:7.00px;background:#e8a850;"></div>
<div style="position:absolute;left:290.60px;top:48.30px;width:12.40px;height:23.40px;background:#fff;"></div>
<div style="position:absolute;left:303.00px;top:47.60px;width:39.00px;height:18.80px;background:#ebebeb;"></div>
<div style="position:absolute;left:297.00px;top:66.40px;width:45.00px;height:5.30px;background:#fdfdd4;"></div>
<div style="position:absolute;left:290.00px;top:67.00px;width:4.70px;height:3.80px;background:#c07010;"></div>
<div style="position:absolute;left:311.00px;top:66.80px;width:8.00px;height:5.00px;background:#f8e08e;"></div>
<div style="position:absolute;left:319.00px;top:66.80px;width:16.00px;height:5.40px;background:#383838;"></div>
<div style="position:absolute;left:495.30px;top:50.70px;width:7.20px;height:8.30px;background:#fbfbc8;"></div>
<div style="position:absolute;left:502.50px;top:48.80px;width:99.50px;height:11.80px;background:#ebebeb;"></div>
<div style="position:absolute;left:502.50px;top:60.00px;width:68.50px;height:3.80px;background:#ebebeb;"></div>
<div style="position:absolute;left:526.50px;top:50.70px;width:8.20px;height:8.30px;background:#c8896a;"></div>
<div style="position:absolute;left:534.70px;top:59.00px;width:7.80px;height:4.80px;background:#f0ecb0;"></div>
<div style="position:absolute;left:973.00px;top:91.00px;width:5.50px;height:9.00px;background:#b5b5b5;"></div>
<div style="position:absolute;left:870.00px;top:112.80px;width:195.00px;height:17.20px;background:#ececec;"></div>
<div style="position:absolute;left:941.00px;top:122.75px;width:8.00px;height:8.00px;background:#b07090;"></div>
<div style="position:absolute;left:1021.00px;top:114.50px;width:8.00px;height:8.25px;background:#b07090;"></div>
<div style="position:absolute;left:905.00px;top:111.80px;width:10.00px;height:2.40px;background:#c4e8f8;"></div>
<div style="position:absolute;left:911.00px;top:111.40px;width:9.00px;height:2.20px;background:#1e1e1e;"></div>
<div style="position:absolute;left:920.00px;top:112.00px;width:7.00px;height:2.20px;background:#9ad0f0;"></div>
<div style="position:absolute;left:934.00px;top:113.00px;width:21.00px;height:0.80px;background:#555;"></div>
<div style="position:absolute;left:957.00px;top:112.60px;width:7.00px;height:1.40px;background:#f4f4c8;"></div>
<div style="position:absolute;left:965.00px;top:113.00px;width:8.00px;height:0.80px;background:#444;"></div>
<div style="position:absolute;left:1045.00px;top:98.80px;width:8.00px;height:1.50px;background:#cc98a0;"></div>
<div style="position:absolute;left:726.00px;top:87.60px;width:86.00px;height:2.00px;background:#ebebeb;"></div>
<div style="position:absolute;left:773.00px;top:59.60px;width:301.00px;height:1.30px;background:#f3f3f3;"></div>
<div style="position:absolute;left:724.00px;top:51.00px;width:1.00px;height:4.00px;background:#999;"></div>
<div style="position:absolute;left:1050px;top:357.4px;width:34px;height:32.5px;background:#fff;border-radius:3.5px;box-shadow:0 0 2px rgba(0,0,0,.08)"></div>
<svg style="position:absolute;left:1057px;top:364.3px" width="18" height="18" viewBox="-9 -9 18 18"><circle cx="0" cy="0" r="8" fill="#fff" stroke="#3a82ea" stroke-width="1.1"/><path d="M-1.89 -7.05A7.30 7.30 0 0 1 7.27 -0.64" fill="none" stroke="#2a74e6" stroke-width="2.3"/><path d="M1.89 7.05A7.30 7.30 0 0 1 -7.27 0.64" fill="none" stroke="#2a74e6" stroke-width="2.3"/><path d="M-4.8 0.8L-1.8 -2.4L1.8 2L4.8 -1.2" fill="none" stroke="#2a74e6" stroke-width="2.5" stroke-linejoin="miter"/></svg>
<div style="position:absolute;left:1060.20px;top:431.10px;width:18.80px;height:26.70px;background:#242427;"></div>
<div style="position:absolute;left:1079.00px;top:431.10px;width:1.00px;height:26.70px;background:#8a8d92;"></div>
<svg style="position:absolute;left:1064px;top:437px" width="14" height="14" viewBox="1064 437 14 14"><path d="M1066 439.4L1071.3 443.4L1066 446.2Z" fill="#e8305e"/><path d="M1075.2 442.6L1075.2 449.3L1069.6 444.6Z" fill="#e0305c"/><path d="M1069.3 443.2L1071.6 443.9L1070.6 445.2L1069.4 444.8Z" fill="#7a2038"/></svg>
</body></html>
